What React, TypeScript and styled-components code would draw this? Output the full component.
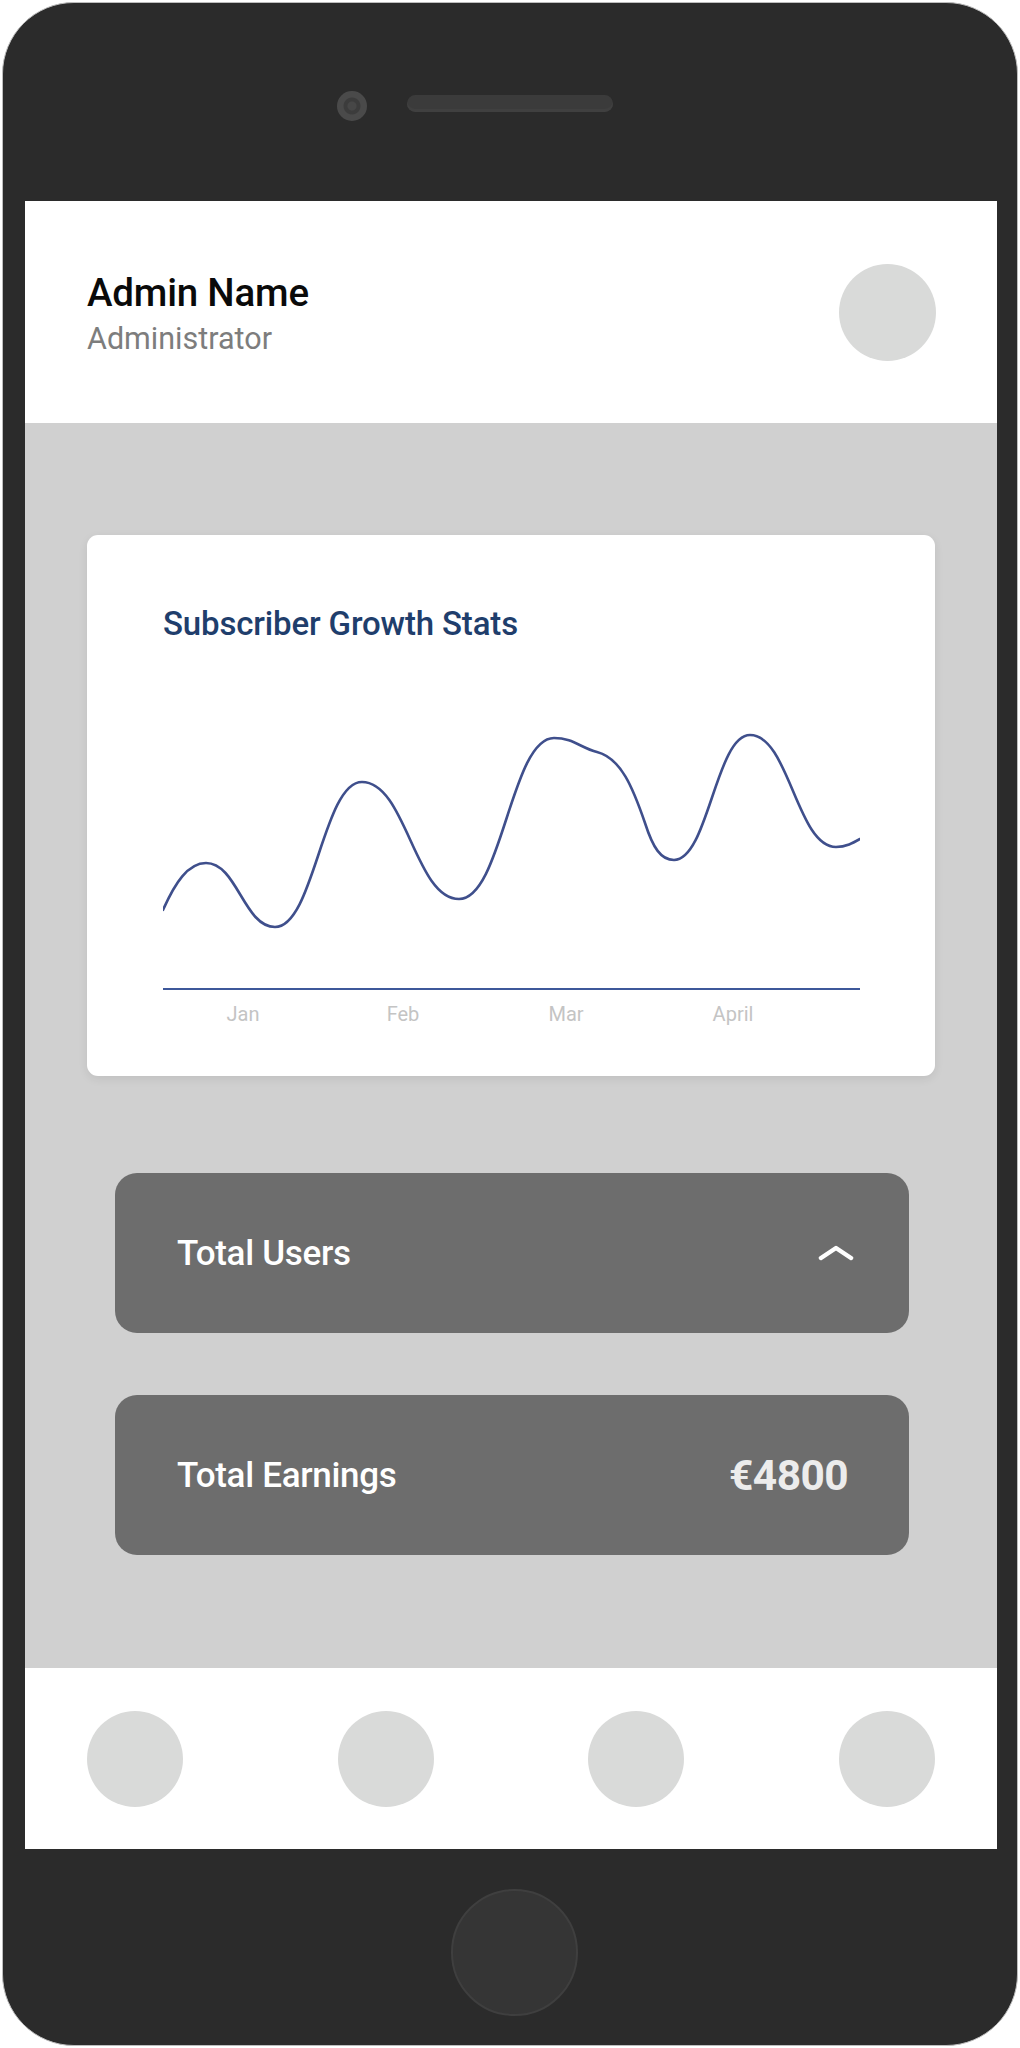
import styled, { createGlobalStyle } from 'styled-components';

const GlobalStyle = createGlobalStyle`
  html, body {
    margin: 0;
    padding: 0;
    background: #ffffff;
    font-family: Roboto, "Liberation Sans", Arial, sans-serif;
  }
`;

const Phone = styled.div`
  box-sizing: border-box;
  width: 1016px;
  height: 2044px;
  margin: 2px 0 0 2px;
  background: #2b2b2b;
  border: 1px solid #bdbdbd;
  border-radius: 72px;
  display: flex;
  flex-direction: column;
  overflow: hidden;
`;

const TopBezel = styled.div`
  height: 198px;
  display: grid;
  grid-template-columns: 1fr auto 1fr;
  align-items: start;
  padding-top: 92px;
  box-sizing: border-box;
`;

const Camera = styled.div`
  justify-self: end;
  margin-right: 40px;
  margin-top: -4px;
  width: 30px;
  height: 30px;
  border-radius: 50%;
  background: radial-gradient(circle, #474747 0 4px, #3c3c3c 5px 8px, #4a4a4a 9px 15px);
`;

const Speaker = styled.div`
  width: 206px;
  height: 17px;
  border-radius: 9px;
  background: #3b3b3b;
  box-shadow: inset 0 -3px 0 #404040;
`;

const Screen = styled.div`
  width: 972px;
  margin-left: 22px;
  display: flex;
  flex-direction: column;
`;

const Header = styled.header`
  height: 222px;
  background: #ffffff;
  display: flex;
  align-items: center;
  justify-content: space-between;
  padding: 0 61px 0 62px;
  box-sizing: border-box;
`;

const Identity = styled.div`
  display: flex;
  flex-direction: column;
  padding-top: 6px;
`;

const AdminName = styled.div`
  font-family: Roboto, "Liberation Sans", sans-serif;
  font-weight: 500;
  font-size: 38.5px;
  line-height: 44px;
  color: #0a0a0a;
  letter-spacing: -0.2px;
`;

const Role = styled.div`
  margin-top: 4px;
  font-family: Roboto, "Liberation Sans", sans-serif;
  font-weight: 400;
  font-size: 30.5px;
  line-height: 40px;
  color: #7d7d7d;
`;

const Circle = styled.div<{ size?: number }>`
  width: ${(p) => p.size ?? 96}px;
  height: ${(p) => p.size ?? 96}px;
  border-radius: 50%;
  background: #d9dad9;
  flex-shrink: 0;
`;

const Main = styled.main`
  height: 1245px;
  background: #d0d0d0;
  box-sizing: border-box;
  padding: 112px 62px 0;
  display: flex;
  flex-direction: column;
`;

const ChartCard = styled.section`
  height: 541px;
  background: #ffffff;
  border-radius: 11px;
  box-shadow: 0 3px 10px rgba(0, 0, 0, 0.08);
  box-sizing: border-box;
  padding: 69px 75px 0 76px;
  display: flex;
  flex-direction: column;
`;

const ChartTitle = styled.h2`
  margin: 0;
  font-family: Roboto, "Liberation Sans", sans-serif;
  font-weight: 500;
  font-size: 33px;
  line-height: 40px;
  letter-spacing: -0.15px;
  color: #1f3e6c;
`;

const ChartArea = styled.div`
  margin-top: 54px;
`;

const ChartSvg = styled.svg`
  display: block;
`;

const MonthRow = styled.div`
  display: grid;
  grid-template-columns: 160px 160px 166px 168px;
  margin-top: 10px;
`;

const Month = styled.span`
  text-align: center;
  font-family: Roboto, "Liberation Sans", sans-serif;
  font-size: 20px;
  line-height: 26px;
  color: #c4c4c4;
`;

const StatList = styled.div`
  display: flex;
  flex-direction: column;
  gap: 62px;
  margin: 97px 26px 0 28px;
`;

const StatCard = styled.div`
  height: 160px;
  border-radius: 22px;
  background: #6d6d6d;
  display: flex;
  align-items: center;
  justify-content: space-between;
  padding: 0 55px 0 62px;
  box-sizing: border-box;
`;

const StatLabel = styled.span`
  font-family: Roboto, "Liberation Sans", sans-serif;
  font-weight: 500;
  font-size: 35px;
  letter-spacing: -0.3px;
  color: #ffffff;
`;

const StatValue = styled.span`
  font-family: Roboto, "Liberation Sans", sans-serif;
  font-weight: 700;
  font-size: 42.5px;
  letter-spacing: -0.6px;
  color: #ececec;
  margin-right: 6px;
`;

const BottomNav = styled.nav`
  height: 181px;
  background: #ffffff;
  display: flex;
  align-items: center;
  justify-content: space-between;
  padding: 0 62px;
  box-sizing: border-box;
`;

const BottomBezel = styled.div`
  flex: 1;
  display: flex;
  justify-content: center;
  padding: 40px 0 0 8px;
`;

const HomeButton = styled.div`
  width: 127px;
  height: 127px;
  border-radius: 50%;
  box-sizing: border-box;
  background: #353535;
  border: 2px solid #3f3f3f;
`;

const months = ['Jan', 'Feb', 'Mar', 'April'];

const growthPath =
  'M0,212 C12,185 25,165 43,165 C74,165 81,229 112,229 C151,229 160,84 199,84 ' +
  'C243,84 252,201 296,201 C339,201 348,40 391,40 C410,40 418,50 434,54 ' +
  'C458,60 470,90 482,125 C490,150 498,162 511,162 C545,162 553,37 587,37 ' +
  'C626,37 634,149 673,149 C683,149 690,145 697,141';

const App = () => {
  return (
    <>
      <GlobalStyle />
      <Phone>
        <TopBezel>
          <Camera />
          <Speaker />
          <span />
        </TopBezel>

        <Screen>
          <Header>
            <Identity>
              <AdminName>Admin Name</AdminName>
              <Role>Administrator</Role>
            </Identity>
            <Circle size={97} />
          </Header>

          <Main>
            <ChartCard>
              <ChartTitle>Subscriber Growth Stats</ChartTitle>
              <ChartArea>
                <ChartSvg width="697" height="293" viewBox="0 0 697 293">
                  <path d={growthPath} fill="none" stroke="#3f4f8c" strokeWidth="2.6" strokeLinecap="round" />
                  <line x1="0" y1="291" x2="697" y2="291" stroke="#3d589a" strokeWidth="2.2" />
                </ChartSvg>
                <MonthRow>
                  {months.map((m) => (
                    <Month key={m}>{m}</Month>
                  ))}
                </MonthRow>
              </ChartArea>
            </ChartCard>

            <StatList>
              <StatCard>
                <StatLabel>Total Users</StatLabel>
                <svg width="36" height="16" viewBox="0 0 36 16">
                  <path d="M3,13 L18,3 L33,13" fill="none" stroke="#ffffff" strokeWidth="4.5" strokeLinecap="round" strokeLinejoin="round" />
                </svg>
              </StatCard>
              <StatCard>
                <StatLabel>Total Earnings</StatLabel>
                <StatValue>€4800</StatValue>
              </StatCard>
            </StatList>
          </Main>

          <BottomNav>
            <Circle />
            <Circle />
            <Circle />
            <Circle />
          </BottomNav>
        </Screen>

        <BottomBezel>
          <HomeButton />
        </BottomBezel>
      </Phone>
    </>
  );
};

export default App;
